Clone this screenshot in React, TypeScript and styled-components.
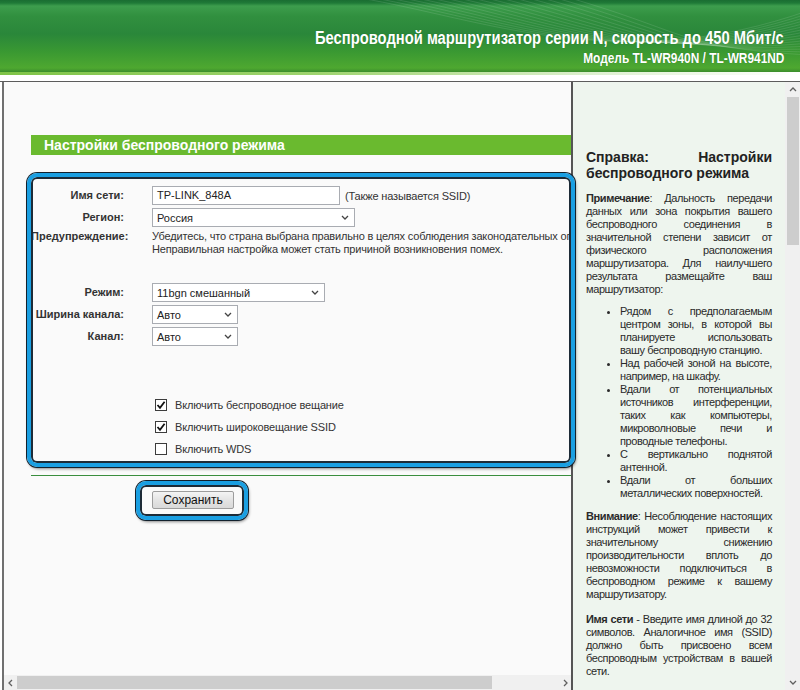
import React from 'react';
import styled, { createGlobalStyle } from 'styled-components';

const Global = createGlobalStyle`
  html, body { margin: 0; padding: 0; background: #ffffff; }
  body { width: 800px; height: 690px; overflow: hidden; font-family: "Liberation Sans", Arial, sans-serif; }
  * { box-sizing: border-box; }
`;

const Page = styled.div`
  position: relative;
  width: 800px;
  height: 690px;
  display: flex;
  flex-direction: column;
  background: #ffffff;
  overflow: hidden;
`;

const HeaderBar = styled.header`
  position: relative;
  flex: none;
  height: 72px;
  padding: 28px 16px 0 0;
  display: flex;
  flex-direction: column;
  align-items: flex-end;
  gap: 2px;
  overflow: hidden;
  background: linear-gradient(180deg, #1a6d32 0px, #1f7a37 3px, #3d9d4d 6px, #31903f 16px, #2a873a 34px, #3a9932 52px, #4ea830 68px, #3b8d2c 72px);
`;

const Swoosh = styled.svg`
  position: absolute;
  left: 0;
  top: 0;
  width: 800px;
  height: 72px;
`;

const Title = styled.div<{ $size: number }>`
  position: relative;
  font-family: "Liberation Sans Narrow", "Arial Narrow", "Liberation Sans", sans-serif;
  font-weight: bold;
  font-size: ${(p) => p.$size}px;
  line-height: ${(p) => p.$size + 2}px;
  color: #ffffff;
  white-space: nowrap;
  transform: scaleX(0.82);
  transform-origin: right center;
  text-shadow: 0 0 1px rgba(0, 60, 0, 0.4);
`;

const HeaderStripe = styled.div`
  flex: none;
  height: 3px;
  background: linear-gradient(90deg, #7fc447 0%, #9fd46f 40%, #dff0d2 75%, #ffffff 100%);
`;

const HeaderGap = styled.div`
  flex: none;
  height: 6px;
  background: #ffffff;
`;

const Frames = styled.div`
  flex: 1;
  min-height: 0;
  display: flex;
  border-top: 1px solid #5c5c5c;
  padding-left: 2px;
`;

const LeftFrame = styled.div`
  flex: none;
  width: 571px;
  border-left: 2px solid #707070;
  border-right: 2px solid #555555;
  display: flex;
  flex-direction: column;
  background: #fafafa;
`;

const LeftContent = styled.div`
  flex: 1;
  min-height: 0;
  overflow: hidden;
  padding: 53px 0 0 27px;
  color: #333333;
  font-size: 11px;
`;

const SectionBar = styled.div`
  height: 20px;
  background: #6aba2f;
  color: #ffffff;
  font-weight: bold;
  font-size: 14px;
  line-height: 20px;
  padding-left: 13px;
  white-space: nowrap;
`;

const FormGrid = styled.div`
  margin-top: 31px;
  display: grid;
  grid-template-columns: 93px 1fr;
  column-gap: 28px;
  row-gap: 3px;
  align-items: center;
`;

const Label = styled.div<{ $top?: boolean }>`
  text-align: right;
  font-weight: bold;
  font-size: 11px;
  line-height: 13px;
  white-space: nowrap;
  align-self: ${(p) => (p.$top ? 'start' : 'center')};
`;

const Field = styled.div`
  display: flex;
  align-items: center;
  min-height: 19px;
  white-space: nowrap;
`;

const Spacer = styled.div<{ $h: number }>`
  grid-column: 1 / span 2;
  height: ${(p) => p.$h}px;
`;

const TextInput = styled.div<{ $w: number }>`
  width: ${(p) => p.$w}px;
  height: 19px;
  border: 1px solid #a9acb2;
  background: #ffffff;
  font-size: 11px;
  line-height: 17px;
  padding-left: 4px;
  color: #222;
`;

const Hint = styled.span`
  margin-left: 5px;
  font-size: 11px;
  letter-spacing: -0.15px;
`;

const SelectBox = styled.div<{ $w: number }>`
  width: ${(p) => p.$w}px;
  height: 19px;
  border: 1px solid #a9acb2;
  background: #ffffff;
  font-size: 11px;
  padding: 0 5px 0 4px;
  display: flex;
  align-items: center;
  justify-content: space-between;
  color: #222;
`;

const WarnText = styled.div`
  font-size: 11px;
  line-height: 13px;
  letter-spacing: -0.18px;
  white-space: nowrap;
  align-self: start;
`;

const CheckRow = styled.label`
  grid-column: 2;
  display: flex;
  align-items: center;
  height: 19px;
  padding-left: 3px;
  gap: 8px;
  font-size: 11px;
  letter-spacing: -0.15px;
  white-space: nowrap;
`;

const Box = styled.span`
  width: 12px;
  height: 12px;
  border: 1px solid #3c3c3c;
  background: #ffffff;
  display: flex;
  align-items: center;
  justify-content: center;
`;

const GreenLine = styled.div`
  margin-top: 17px;
  height: 1px;
  background: #3a8e3e;
`;

const ButtonRow = styled.div`
  margin-top: 15px;
  padding-left: 121px;
  display: flex;
`;

const SaveButton = styled.button`
  width: 82px;
  height: 18px;
  padding: 0;
  border: 1px solid #9d9d9d;
  border-radius: 2px;
  background: linear-gradient(180deg, #f4f4f4 0%, #e4e4e4 50%, #d9d9d9 100%);
  font-family: "Liberation Sans", Arial, sans-serif;
  font-size: 12px;
  line-height: 16px;
  color: #111;
`;

const HScroll = styled.div`
  flex: none;
  height: 15px;
  display: flex;
  background: #f0f0f0;
`;

const HArrow = styled.div`
  flex: none;
  width: 13px;
  display: flex;
  align-items: center;
  justify-content: center;
`;

const HTrack = styled.div`
  flex: 1;
  display: flex;
  align-items: stretch;
  padding: 1px 0;
`;

const HThumb = styled.div`
  width: 475px;
  background: #cdcdcd;
`;

const RightFrame = styled.div`
  flex: 1;
  min-width: 0;
  display: flex;
  background: #eef5ee;
`;

const Help = styled.div`
  flex: 1;
  min-width: 0;
  overflow: hidden;
  padding: 67px 13px 0 13px;
  color: #2a2a2a;
  font-size: 11px;
  line-height: 13px;
  letter-spacing: -0.4px;
`;

const HelpTitle = styled.h2`
  margin: 0;
  font-size: 14px;
  line-height: 16px;
  font-weight: bold;
  letter-spacing: 0;
  color: #222;
`;

const HelpPara = styled.div<{ $mt: number }>`
  margin-top: ${(p) => p.$mt}px;
`;

const JLine = styled.span<{ $last?: boolean }>`
  display: block;
  text-align: ${(p) => (p.$last ? 'left' : 'justify')};
  text-align-last: ${(p) => (p.$last ? 'left' : 'justify')};
`;

const HelpList = styled.ul`
  margin: 9px 0 0 0;
  padding-left: 34px;
  list-style: disc;
`;

const VScroll = styled.div`
  flex: none;
  width: 15px;
  display: flex;
  flex-direction: column;
  background: #f0f0f0;
`;

const VArrow = styled.div`
  flex: none;
  height: 15px;
  display: flex;
  align-items: center;
  justify-content: center;
`;

const VTrack = styled.div`
  flex: 1;
  padding: 0 1px 0 2px;
`;

const VThumb = styled.div`
  height: 148px;
  background: #cdcdcd;
`;

const Highlight = styled.div<{ $x: number; $y: number; $w: number; $h: number }>`
  position: absolute;
  left: ${(p) => p.$x}px;
  top: ${(p) => p.$y}px;
  width: ${(p) => p.$w}px;
  height: ${(p) => p.$h}px;
  border: 4px solid #1a9fe2;
  border-radius: 10px;
  box-shadow: 0 0 0 1px #13212d, inset 0 0 0 2px #1d2b37, 1px 2px 3px rgba(0, 0, 0, 0.45);
  pointer-events: none;
`;

const Chevron: React.FC<{ dir: 'up' | 'down' | 'left' | 'right'; color?: string }> = ({ dir, color = '#606060' }) => {
  const pts: Record<string, string> = {
    down: '1,2 4,5 7,2',
    up: '1,5 4,2 7,5',
    left: '5,1 2,4 5,7',
    right: '3,1 6,4 3,7',
  };
  return (
    <svg width="8" height="8" viewBox="0 0 8 8">
      <polyline points={pts[dir]} fill="none" stroke={color} strokeWidth="1.3" />
    </svg>
  );
};

const Check = () => (
  <svg width="10" height="10" viewBox="0 0 10 10">
    <polyline points="1.5,5 4,7.8 8.6,1.8" fill="none" stroke="#111" strokeWidth="1.8" />
  </svg>
);

const Select: React.FC<{ w: number; value: string }> = ({ w, value }) => (
  <SelectBox $w={w}>
    <span>{value}</span>
    <Chevron dir="down" color="#444" />
  </SelectBox>
);

const Lines: React.FC<{ lines: React.ReactNode[] }> = ({ lines }) => (
  <>
    {lines.map((l, i) => (
      <JLine key={i} $last={i === lines.length - 1}>
        {l}
      </JLine>
    ))}
  </>
);

const swooshPaths = Array.from({ length: 16 }, (_, i) => {
  const s = 360 + i * 14;
  return `M ${s} -2 C ${s + 120} ${18 + i}, ${620 + i * 4} ${78 - i * 2}, 810 ${10 + i * 3}`;
});

const bullets: string[][] = [
  ['Рядом с предполагаемым', 'центром зоны, в которой вы', 'планируете использовать', 'вашу беспроводную станцию.'],
  ['Над рабочей зоной на высоте,', 'например, на шкафу.'],
  ['Вдали от потенциальных', 'источников интерференции,', 'таких как компьютеры,', 'микроволновые печи и', 'проводные телефоны.'],
  ['С вертикально поднятой', 'антенной.'],
  ['Вдали от больших', 'металлических поверхностей.'],
];

export default function App() {
  return (
    <Page>
      <Global />
      <HeaderBar>
        <Swoosh viewBox="0 0 800 72">
          {swooshPaths.map((d, i) => (
            <path key={i} d={d} fill="none" stroke="#ffffff" strokeOpacity={0.14} strokeWidth={0.8} />
          ))}
        </Swoosh>
        <Title $size={18}>Беспроводной маршрутизатор серии N, скорость до 450 Мбит/с</Title>
        <Title $size={14.5}>Модель TL-WR940N / TL-WR941ND</Title>
      </HeaderBar>
      <HeaderStripe />
      <HeaderGap />
      <Frames>
        <LeftFrame>
          <LeftContent>
            <SectionBar>Настройки беспроводного режима</SectionBar>
            <FormGrid>
              <Label>Имя сети:</Label>
              <Field>
                <TextInput $w={188}>TP-LINK_848A</TextInput>
                <Hint>(Также называется SSID)</Hint>
              </Field>
              <Label>Регион:</Label>
              <Field>
                <Select w={203} value="Россия" />
              </Field>
              <Label $top>Предупреждение:</Label>
              <WarnText>
                Убедитесь, что страна выбрана правильно в целях соблюдения законодательных ограничений.
                <br />
                Неправильная настройка может стать причиной возникновения помех.
              </WarnText>
              <Spacer $h={21} />
              <Label>Режим:</Label>
              <Field>
                <Select w={173} value="11bgn смешанный" />
              </Field>
              <Label>Ширина канала:</Label>
              <Field>
                <Select w={86} value="Авто" />
              </Field>
              <Label>Канал:</Label>
              <Field>
                <Select w={86} value="Авто" />
              </Field>
              <Spacer $h={43} />
              <CheckRow>
                <Box>
                  <Check />
                </Box>
                Включить беспроводное вещание
              </CheckRow>
              <CheckRow>
                <Box>
                  <Check />
                </Box>
                Включить широковещание SSID
              </CheckRow>
              <CheckRow>
                <Box />
                Включить WDS
              </CheckRow>
            </FormGrid>
            <GreenLine />
            <ButtonRow>
              <SaveButton>Сохранить</SaveButton>
            </ButtonRow>
          </LeftContent>
          <HScroll>
            <HArrow>
              <Chevron dir="left" />
            </HArrow>
            <HTrack>
              <HThumb />
            </HTrack>
            <HArrow>
              <Chevron dir="right" />
            </HArrow>
          </HScroll>
        </LeftFrame>
        <RightFrame>
          <Help>
            <HelpTitle>
              <Lines lines={['Справка: Настройки', 'беспроводного режима']} />
            </HelpTitle>
            <HelpPara $mt={11}>
              <Lines
                lines={[
                  <>
                    <b>Примечание</b>: Дальность передачи
                  </>,
                  'данных или зона покрытия вашего',
                  'беспроводного соединения в',
                  'значительной степени зависит от',
                  'физического расположения',
                  'маршрутизатора. Для наилучшего',
                  'результата размещайте ваш',
                  'маршрутизатор:',
                ]}
              />
            </HelpPara>
            <HelpList>
              {bullets.map((b, i) => (
                <li key={i}>
                  <Lines lines={b} />
                </li>
              ))}
            </HelpList>
            <HelpPara $mt={10}>
              <Lines
                lines={[
                  <>
                    <b>Внимание</b>: Несоблюдение настоящих
                  </>,
                  'инструкций может привести к',
                  'значительному снижению',
                  'производительности вплоть до',
                  'невозможности подключиться в',
                  'беспроводном режиме к вашему',
                  'маршрутизатору.',
                ]}
              />
            </HelpPara>
            <HelpPara $mt={12}>
              <Lines
                lines={[
                  <>
                    <b>Имя сети</b> - Введите имя длиной до 32
                  </>,
                  'символов. Аналогичное имя (SSID)',
                  'должно быть присвоено всем',
                  'беспроводным устройствам в вашей',
                  'сети.',
                ]}
              />
            </HelpPara>
            <HelpPara $mt={12}>
              <Lines
                lines={[
                  <>
                    <b>Регион</b> - Выберите ваш регион из
                  </>,
                  'выпадающего списка.',
                ]}
              />
            </HelpPara>
          </Help>
          <VScroll>
            <VArrow>
              <Chevron dir="up" />
            </VArrow>
            <VTrack>
              <VThumb />
            </VTrack>
            <VArrow>
              <Chevron dir="down" />
            </VArrow>
          </VScroll>
        </RightFrame>
      </Frames>
      <Highlight $x={27} $y={173} $w={548} $h={294} />
      <Highlight $x={136} $y={481} $w={112} $h={39} />
    </Page>
  );
}
